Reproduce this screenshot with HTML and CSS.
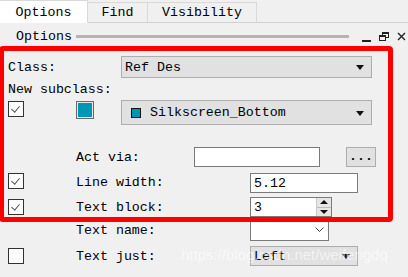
FILE: index.html
```html
<!DOCTYPE html>
<html lang="en">
<head>
    <meta charset="UTF-8">
    <title>Options</title>
    <link rel="stylesheet" href="styles.css">
</head>
<body>
    <div class="tabs">
        <div class="tab active">Options</div>
        <div class="tab tab-find">Find</div>
        <div class="tab tab-vis">Visibility</div>
    </div>

    <div class="dock-title">
        <span class="dock-name">Options</span>
        <span class="grip"></span>
        <svg class="dock-icons" width="48" height="12" viewBox="0 0 48 12">
            <!-- minimize -->
            <rect x="4" y="9" width="9" height="2" fill="#222"/>
            <!-- restore -->
            <rect x="24.5" y="1.5" width="6" height="5" fill="none" stroke="#222"/>
            <rect x="24.5" y="1.5" width="6" height="1.5" fill="#222"/>
            <rect x="21.5" y="4.5" width="6" height="5" fill="#f0f0f0" stroke="#222"/>
            <rect x="21.5" y="4.5" width="6" height="1.5" fill="#222"/>
            <!-- close -->
            <path d="M40 2 L47 9 M47 2 L40 9" stroke="#222" stroke-width="1.4"/>
        </svg>
    </div>

    <div class="form">
        <div class="row row-class">
            <span class="label w-class">Class:</span>
            <div class="combo w-wide"><span>Ref Des</span><i class="tri"></i></div>
        </div>

        <div class="row row-sub">
            <span class="label">New subclass:</span>
        </div>

        <div class="row row-layer">
            <div class="lead"><span class="check on"></span></div>
            <div class="swatch-cell"><span class="swatch"></span></div>
            <div class="combo combo-tall w-wide"><span class="mini-swatch"></span><span>Silkscreen_Bottom</span><i class="tri"></i></div>
        </div>

        <div class="row row-act">
            <div class="lead"></div>
            <span class="label w-act">Act via:</span>
            <div class="input w-act-input"></div>
            <div class="dots-btn">...</div>
        </div>

        <div class="row row-line">
            <div class="lead"><span class="check on"></span></div>
            <span class="label w-field">Line width:</span>
            <div class="input w-num">5.12</div>
        </div>

        <div class="row row-block">
            <div class="lead"><span class="check on"></span></div>
            <span class="label w-field">Text block:</span>
            <div class="input spin">
                <span>3</span>
                <span class="spin-btns">
                    <i class="up"></i>
                    <i class="down"></i>
                </span>
            </div>
        </div>

        <div class="row row-name">
            <div class="lead"></div>
            <span class="label w-field">Text name:</span>
            <div class="input name-combo">
                <svg class="chev" width="9" height="6" viewBox="0 0 9 6"><path d="M0.5 0.5 L4.5 4.5 L8.5 0.5" fill="none" stroke="#444"/></svg>
            </div>
        </div>

        <div class="row row-just">
            <div class="lead"><span class="check"></span></div>
            <span class="label w-field">Text just:</span>
            <div class="combo w-num"><span>Left</span><i class="tri"></i></div>
        </div>
    </div>

    <div class="marker"></div>
    <div class="watermark">https://blog.csdn.net/weifengdq</div>
</body>
</html>
```

FILE: styles.css
```css
body {
    margin: 0;
    background-color: #f0f0f0;
    color: #000;
    font-family: "Liberation Mono", "DejaVu Sans Mono", monospace;
    font-size: 13.3px;
    width: 408px;
    height: 277px;
    overflow: hidden;
    position: relative;
}

/* tab strip */
.tabs {
    display: flex;
    height: 22px;
    border-bottom: 1px solid #d0d0d0;
}
.tab {
    box-sizing: border-box;
    display: flex;
    align-items: center;
    justify-content: center;
    margin-top: 2px;
    height: 20px;
    border: 1px solid #d9d9d9;
    border-left: none;
    border-bottom: none;
}
.tab.active {
    background-color: #fff;
    width: 88px;
    height: 23px;
    margin-top: 0;
    padding-top: 1px;
    border-right: 1px solid #d9d9d9;
}
.tab-find {
    width: 60px;
}
.tab-vis {
    width: 109px;
}

/* dock title */
.dock-title {
    display: flex;
    align-items: center;
    height: 26px;
}
.dock-name {
    padding-left: 16px;
}
.grip {
    width: 273px;
    height: 3px;
    margin-left: 4px;
    background-color: #b4b4b4;
}
.dock-icons {
    margin-left: 9px;
    margin-top: 2px;
}

/* form */
.form {
    padding-top: 7px;
}
.row {
    display: flex;
    align-items: center;
    padding-left: 8px;
}
.lead {
    width: 68px;
    flex-shrink: 0;
}
.label {
    white-space: pre;
}
.w-class {
    width: 113px;
}
.w-act {
    width: 118px;
}
.w-field {
    width: 174px;
}

.row-class {
    height: 22px;
}
.row-sub {
    height: 22px;
}
.row-layer {
    height: 25px;
    align-items: flex-start;
}
.row-layer .lead,
.row-layer .swatch-cell {
    padding-top: 1px;
}
.row-act {
    height: 20px;
    margin-top: 22px;
}
.row-line {
    height: 20px;
    margin-top: 6px;
    align-items: flex-start;
}
.row-line .label {
    line-height: 20px;
}
.row-block {
    height: 20px;
    margin-top: 4px;
}
.row-name {
    height: 22px;
    margin-top: 2px;
}
.row-just {
    height: 20px;
    margin-top: 5px;
}

.check {
    box-sizing: border-box;
    display: block;
    width: 16px;
    height: 16px;
    border: 1px solid #333;
    background-color: #fff;
    position: relative;
}
.check.on::after {
    content: "";
    position: absolute;
    left: 4px;
    top: 2px;
    width: 4px;
    height: 7px;
    border: solid #555;
    border-width: 0 1.5px 1.5px 0;
    transform: rotate(40deg);
}

.swatch-cell {
    width: 45px;
    flex-shrink: 0;
}
.swatch {
    box-sizing: border-box;
    display: block;
    width: 18px;
    height: 18px;
    border: 1px solid #6a6a6a;
    box-shadow: inset 0 0 0 1px #e8e8e8;
    background-color: #0096b6;
}

.combo {
    box-sizing: border-box;
    display: flex;
    align-items: center;
    height: 22px;
    padding-left: 3px;
    background-color: #e1e1e1;
    border: 1px solid #adadad;
    position: relative;
}
.combo-tall {
    height: 25px;
    padding-left: 9px;
}
.w-wide {
    width: 251px;
}
.tri {
    position: absolute;
    right: 7px;
    top: 50%;
    margin-top: -2px;
    width: 0;
    height: 0;
    border-left: 4px solid transparent;
    border-right: 4px solid transparent;
    border-top: 5px solid #111;
}
.mini-swatch {
    box-sizing: border-box;
    width: 10px;
    height: 10px;
    border: 1px solid #111;
    background-color: #0096b6;
    margin-right: 9px;
}

.input {
    box-sizing: border-box;
    display: flex;
    align-items: center;
    height: 20px;
    padding-left: 3px;
    background-color: #fff;
    border: 1px solid #7a7a7a;
}
.w-act-input {
    width: 126px;
}
.w-num {
    width: 108px;
}
.row-just .combo {
    height: 20px;
}
.dots-btn {
    box-sizing: border-box;
    width: 30px;
    height: 20px;
    margin-left: 26px;
    background-color: #e1e1e1;
    border: 1px solid #adadad;
    text-align: center;
    line-height: 18px;
    font-weight: bold;
}

.spin {
    width: 82px;
    position: relative;
}
.spin-btns {
    position: absolute;
    right: 0;
    top: 0;
    width: 14px;
    height: 18px;
    border-left: 1px solid #c8c8c8;
    display: flex;
    flex-direction: column;
}
.spin-btns i {
    flex: 1;
    position: relative;
    background-color: #e6e6e6;
}
.spin-btns .up {
    border-bottom: 1px solid #bbb;
}
.spin-btns i::after {
    content: "";
    position: absolute;
    left: 3px;
    top: 2px;
    border-left: 4px solid transparent;
    border-right: 4px solid transparent;
}
.spin-btns .up::after {
    border-bottom: 4px solid #111;
}
.spin-btns .down::after {
    border-top: 4px solid #111;
}

.name-combo {
    width: 79px;
    height: 22px;
    justify-content: flex-end;
    padding-right: 4px;
}

/* annotation overlay */
.marker {
    position: absolute;
    left: -1px;
    top: 46px;
    width: 394px;
    height: 176px;
    box-sizing: border-box;
    border: 5px solid #ff0000;
    border-radius: 4px;
}
.watermark {
    position: absolute;
    left: 181px;
    top: 246px;
    font-family: "Liberation Sans", Arial, sans-serif;
    font-size: 15px;
    color: rgba(255, 255, 255, 0.6);
    white-space: nowrap;
}
```
